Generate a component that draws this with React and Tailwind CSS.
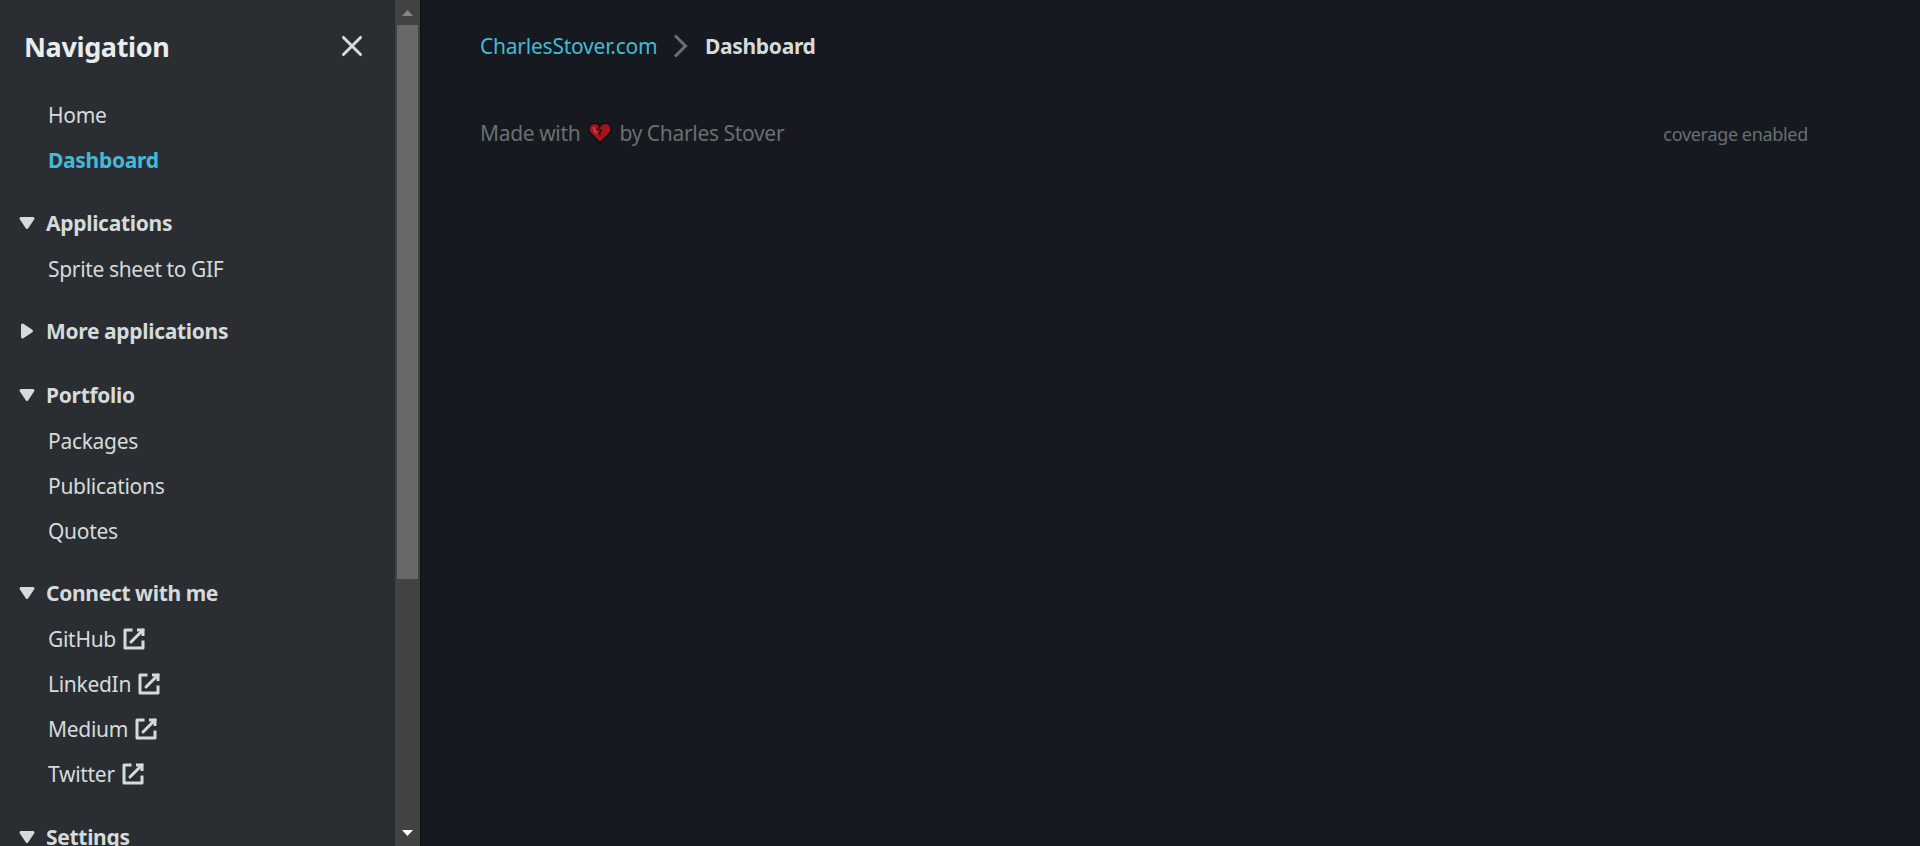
import React from "react";

const SECTIONS = [
  { title: "Applications", open: true, items: ["Sprite sheet to GIF"] },
  { title: "More applications", open: false, items: [] },
  { title: "Portfolio", open: true, items: ["Packages", "Publications", "Quotes"] },
  { title: "Connect with me", open: true, external: true, items: ["GitHub", "LinkedIn", "Medium", "Twitter"] },
  { title: "Settings", open: true, items: [] },
];

function Caret({ open }) {
  return (
    <svg viewBox="0 0 16 16" className={open ? "size-6 shrink-0" : "size-6 shrink-0 -rotate-90"}>
      <path d="M4 5h8l-4 6-4-6z" fill="#d5dbdb" stroke="#d5dbdb" strokeWidth="2" strokeLinejoin="round" />
    </svg>
  );
}

function ExternalIcon() {
  return (
    <svg viewBox="0 0 16 16" className="size-6 shrink-0" fill="none" stroke="#d5dbdb" strokeWidth="2">
      <path d="M10 2h4v4" />
      <path d="m6 10 8-8" strokeLinecap="round" />
      <path d="M14 9.048V14H2V2h5" strokeLinejoin="round" />
    </svg>
  );
}

function BrokenHeart() {
  return (
    <svg viewBox="0 0 24 24" className="size-6 shrink-0" role="img" aria-label="love">
      <path d="M12 21.700 2.300 12C-.3 8.500 1 2.500 6.500 2.500c2.500 0 4.500 1 5.500 3 1-2 3-3 5.500-3 5.500 0 6.800 6 4.200 9.500z" fill="#a5141d" stroke="#09090c" strokeWidth="1.200" />
      <path d="M5.500 6c.200 3 1.500 4.500 3.500 6.500" stroke="#bd4a3c" strokeWidth="2" fill="none" />
      <path d="m12 5-2.200 3 3.700 1.500-2.500 2.500 1.500 2" stroke="#09090c" strokeWidth="1.200" fill="none" />
    </svg>
  );
}

export default function App() {
  return (
    <div className="flex h-[846px] w-full overflow-hidden bg-[#16191f] font-['Noto_Sans',sans-serif] text-[21px] leading-[30px] tracking-[-0.3px] [word-spacing:-0.4px] text-[#d5dbdb]">
      <aside className="flex w-[420px] shrink-0 bg-[#2a2e33] shadow-[1px_0_2px_rgba(0,0,0,0.4)]">
        <nav className="min-w-0 flex-1 overflow-hidden">
          <div className="flex h-[92px] items-start justify-between pt-[30px] pr-[31px] pl-6">
            <h2 className="text-[27px] leading-[33px] font-bold tracking-[-0.37px] text-[#eaeded]">Navigation</h2>
            <button aria-label="Close" className="pt-1">
              <svg viewBox="0 0 16 16" className="size-6" stroke="#d5dbdb" strokeWidth="2" strokeLinecap="round">
                <path d="m2.300 2.300 11.400 11.400M13.700 2.300 2.300 13.700" />
              </svg>
            </button>
          </div>
          <ul className="pl-12">
            <li className="flex h-[45px] items-center">Home</li>
            <li className="flex h-[45px] items-center font-bold text-[#44b9d6]">Dashboard</li>
          </ul>
          {SECTIONS.map((s) => (
            <section key={s.title} className="pt-[17.600px]">
              <h3 className="flex h-[46px] items-center gap-[7px] pl-[15px] font-bold">
                <Caret open={s.open} />
                {s.title}
              </h3>
              <ul className="pl-12">
                {s.items.map((item) => (
                  <li key={item} className="flex h-[45px] items-center gap-[6px] pt-px">
                    {item}
                    {s.external && <ExternalIcon />}
                  </li>
                ))}
              </ul>
            </section>
          ))}
        </nav>
        <div className="flex w-[25px] flex-col items-center bg-[#424242]">
          <svg viewBox="0 0 25 25" className="size-[25px] shrink-0" fill="#868686">
            <path d="M7 16h11l-5.500-6z" />
          </svg>
          <div className="h-[554px] w-[21px] bg-[#686868]" />
          <svg viewBox="0 0 25 25" className="mt-auto size-[25px] shrink-0" fill="#ffffff">
            <path d="M7 9h11l-5.500 6z" />
          </svg>
        </div>
      </aside>
      <main className="flex-1 pt-[31px] pr-[112px] pl-[60px]">
        <div className="flex h-[30px] items-center">
          <a className="tracking-[-0.23px] text-[#44b9d6]">CharlesStover.com</a>
          <svg viewBox="0 0 16 16" className="mr-[12px] ml-[11.500px] size-6" fill="none" stroke="#687078" strokeWidth="2">
            <path d="m4 1 7 7-7 7" />
          </svg>
          <span className="font-bold">Dashboard</span>
        </div>
        <footer className="mt-[57px] flex h-[30px] items-center justify-between text-[#687071]">
          <div className="flex items-center">
            Made with
            <span className="mr-[7px] ml-[8px]">
              <BrokenHeart />
            </span>
            by Charles Stover
          </div>
          <div className="pt-[2px] text-[18px]">coverage enabled</div>
        </footer>
      </main>
    </div>
  );
}
